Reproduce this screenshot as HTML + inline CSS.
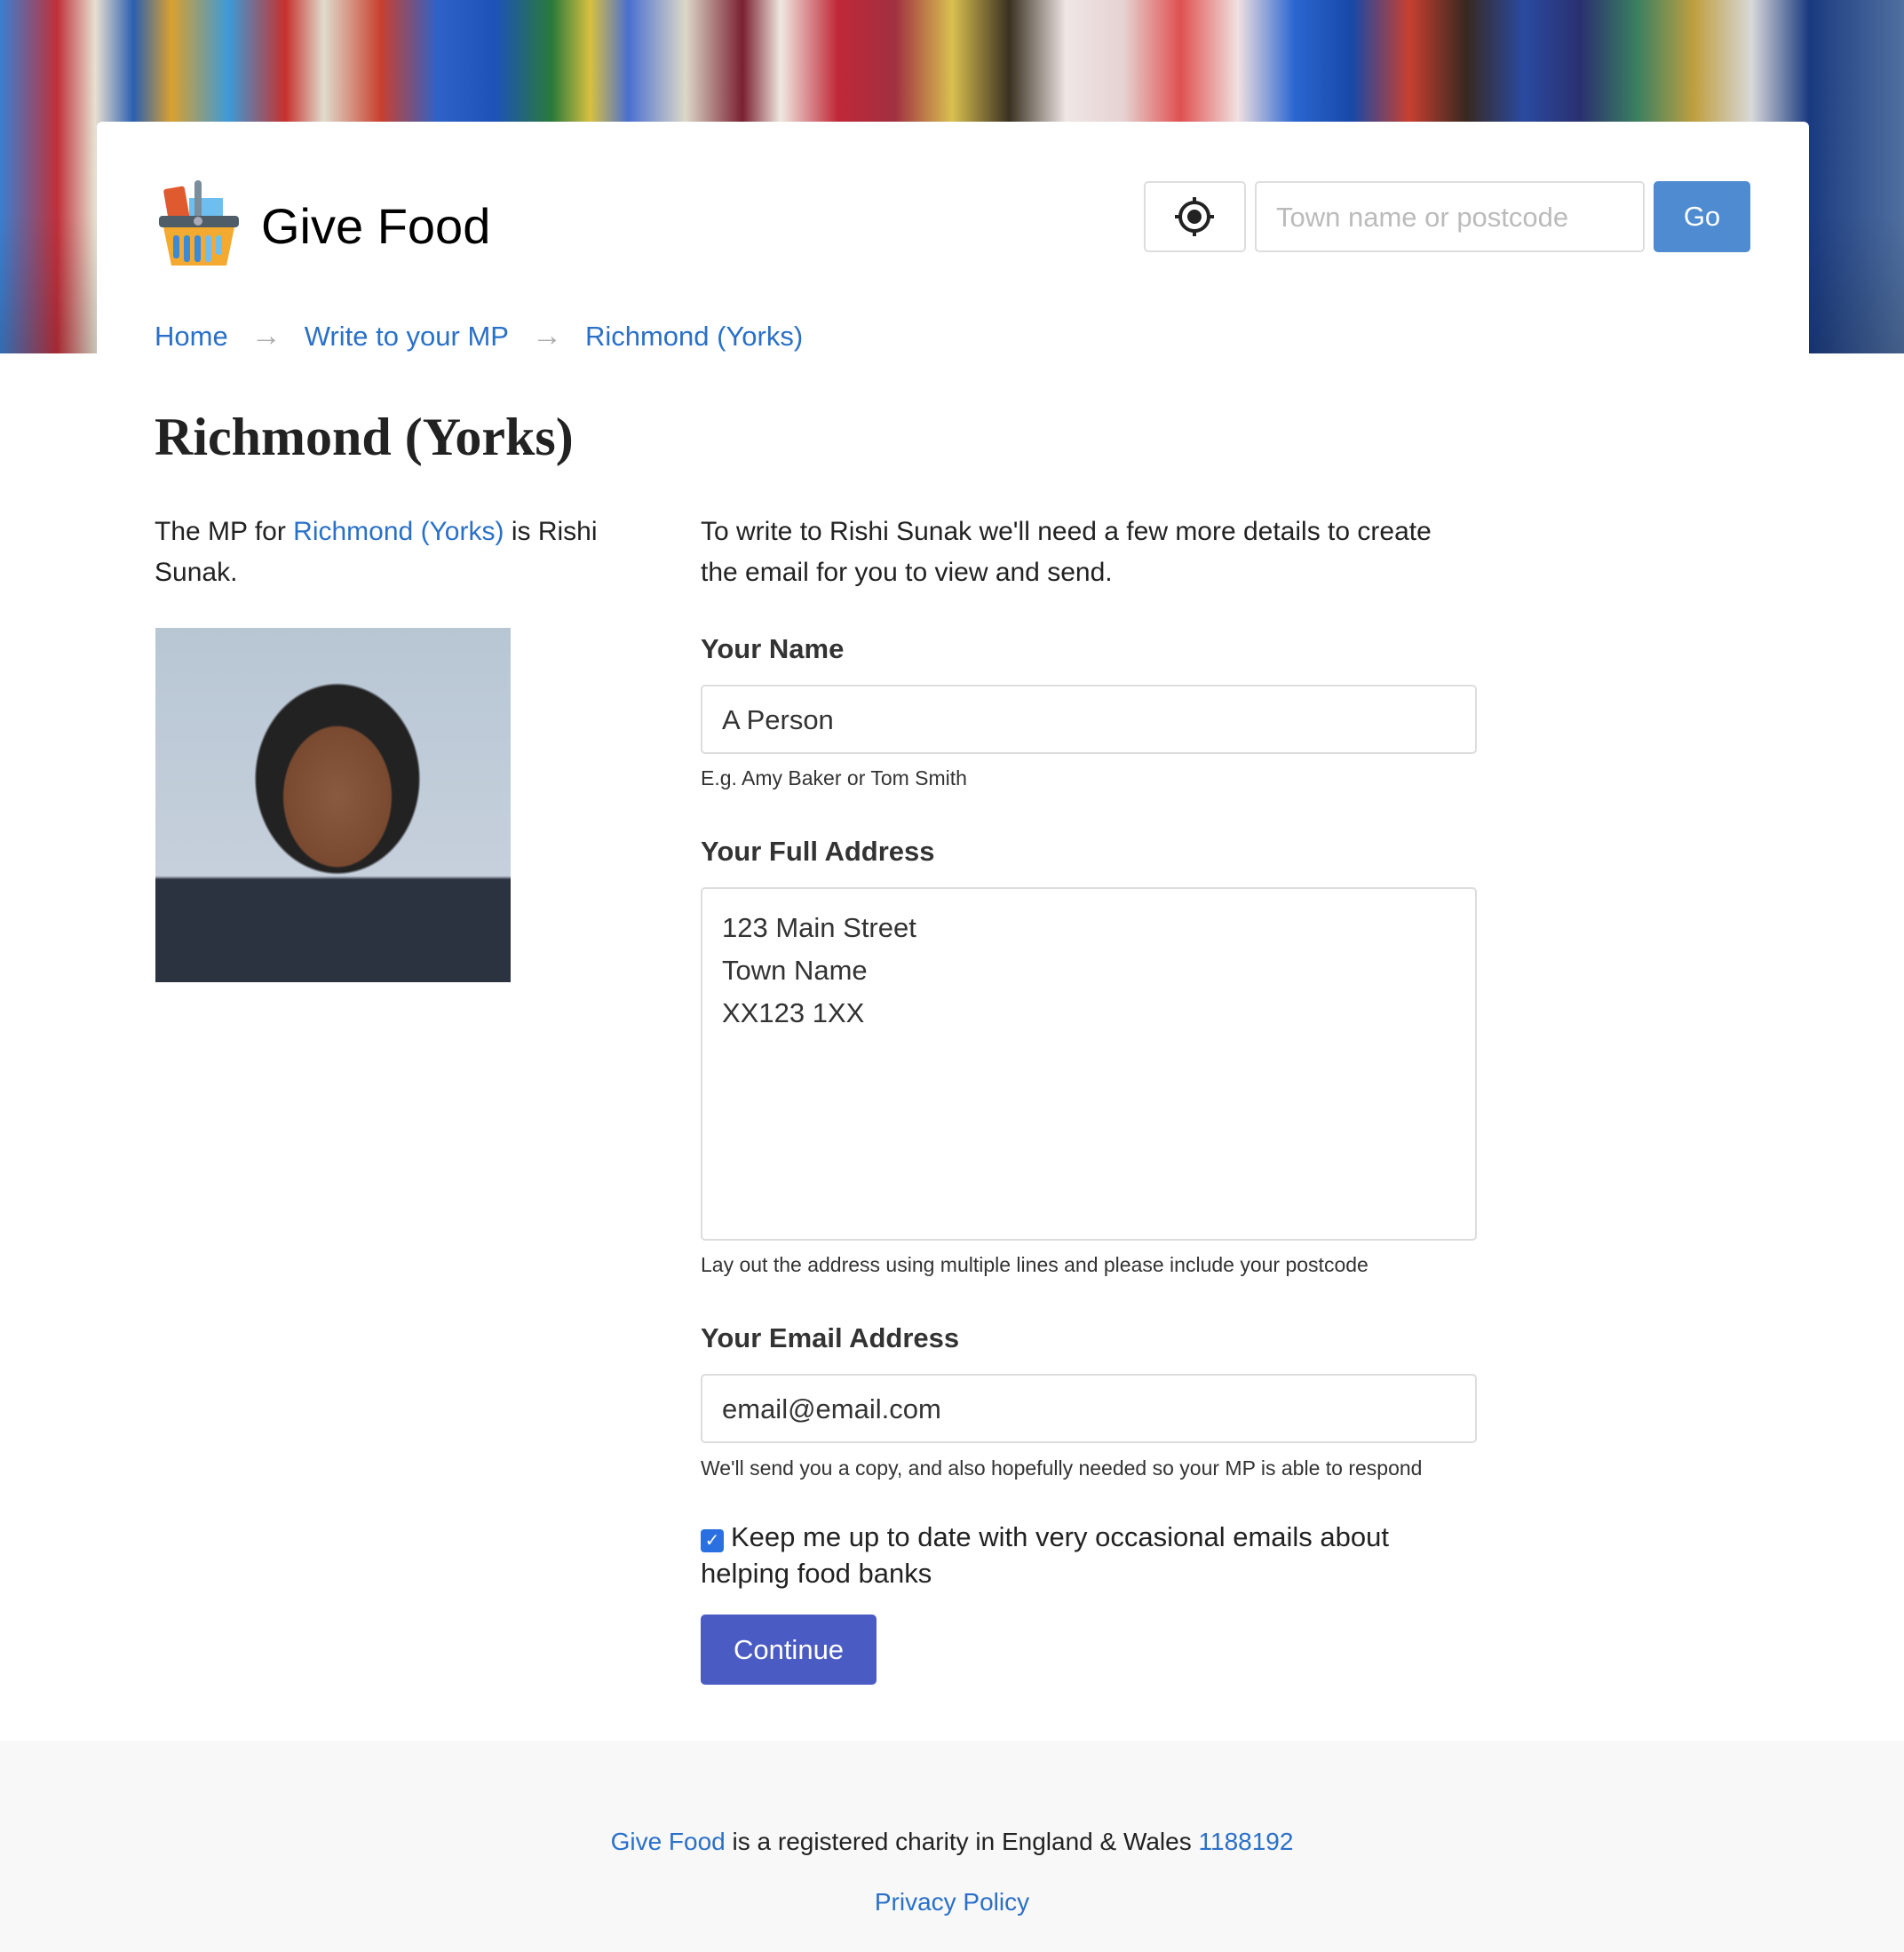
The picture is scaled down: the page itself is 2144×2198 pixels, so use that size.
<!DOCTYPE html>
<html><head><meta charset="utf-8"><style>
*{box-sizing:border-box;margin:0;padding:0}
body{width:2144px;height:2198px;font-family:"Liberation Sans",Arial,sans-serif;color:#222;background:#fff;position:relative;overflow:hidden}
.banner{position:absolute;left:0;top:0;width:2144px;height:398px;
background:
linear-gradient(180deg,rgba(0,0,0,0) 0,rgba(0,0,0,0) 60%,rgba(0,0,0,.15) 100%),
linear-gradient(90deg,#3a7fd0 0,#c0303a 3%,#e8e0d0 5%,#2a5fb0 7%,#d9a030 9%,#3c9ad8 12%,#c8302c 15%,#e0dccd 17%,#c9402e 20%,#2e62c8 23%,#1d52b8 26%,#2a7a3a 29%,#d8c040 31%,#4a6fd0 33%,#dcd8c8 36%,#7a2030 39%,#efe8e0 41%,#c02838 44%,#a03040 47%,#d9c050 50%,#3a3020 53%,#efe6e6 56%,#e6d2d2 59%,#e05050 62%,#f0e0e0 65%,#2a66d0 68%,#1848a8 71%,#c84030 74%,#382820 77%,#2a4aa0 80%,#2a3070 83%,#3a8060 86%,#c0a040 89%,#d8d8d8 92%,#1a3a80 95%,#5070a0 100%);}
.card{position:absolute;left:109px;top:137px;width:1928px;height:400px;background:#fff;border-radius:6px 6px 0 0}
.logo{position:absolute;left:179px;top:203px}
.brand{position:absolute;left:294px;top:222px;font-size:56px;color:#000}
.loc{position:absolute;left:1288px;top:204px;width:115px;height:80px;border:2px solid #ddd;border-radius:5px;background:#fff}
.search{position:absolute;left:1413px;top:204px;width:439px;height:80px;border:2px solid #ddd;border-radius:5px;font-size:31px;color:#bbb;padding:21px 22px}
.go{position:absolute;left:1862px;top:204px;width:109px;height:80px;background:#4f8bd0;border-radius:5px;color:#fff;font-size:31px;text-align:center;line-height:80px}
.crumb{position:absolute;left:174px;top:359px;font-size:31px;color:#2a70c8;white-space:nowrap}
.crumb span{color:#aaa;margin:0 26px;font-size:34px}
a{color:#2a70c8;text-decoration:none}
h1{position:absolute;left:174px;top:458px;font-family:"Liberation Serif",serif;font-size:60px;font-weight:bold;color:#222}
.lt{position:absolute;left:174px;top:576px;width:540px;font-size:30px;line-height:46px}
.photo{position:absolute;left:175px;top:707px;width:400px;height:399px;background:radial-gradient(ellipse 100px 130px at 205px 190px,#8a5a40 0,#7a4a30 60%,transparent 62%),radial-gradient(ellipse 130px 150px at 205px 170px,#222 0,#222 70%,transparent 72%),linear-gradient(180deg,#b8c6d4,#c6d0dc 70%,#2c3340 71%,#2c3340)}
.rt{position:absolute;left:789px;width:880px}
.p{font-size:30px;line-height:46px;width:850px}
.lab{font-size:31px;font-weight:bold;color:#333}
.inp{border:2px solid #ddd;border-radius:5px;height:78px;font-size:31px;padding:20px 22px;color:#333;width:874px}
.help{font-size:23px;color:#333}
.btn{position:absolute;left:789px;top:1818px;width:198px;height:79px;background:#4a5bc4;border-radius:5px;color:#fff;font-size:31px;text-align:center;line-height:79px}
.foot{position:absolute;left:0;top:1960px;width:2144px;height:238px;background:#f8f8f8;text-align:center;font-size:28px;color:#222}
.cb{display:inline-block;width:26px;height:26px;background:#2a70e0;border-radius:4px;vertical-align:0;margin-right:8px;color:#fff;font-size:20px;line-height:26px;text-align:center}
</style></head><body>
<div class="banner"></div>
<div class="card"></div>
<svg class="logo" width="90" height="96" viewBox="0 0 90 96">
<rect x="8" y="8" width="24" height="40" rx="3" fill="#e05a30" transform="rotate(-10 20 28)"/>
<rect x="34" y="20" width="38" height="30" fill="#6cbff0"/>
<rect x="40" y="0" width="8" height="50" rx="4" fill="#7a8d9a"/>
<path d="M4 48 H86 L76 96 H14 Z" fill="#f4aa30"/>
<rect x="0" y="40" width="90" height="13" rx="4" fill="#4f5d68"/>
<circle cx="44" cy="46" r="5" fill="#aab"/>
<rect x="16" y="62" width="7" height="26" rx="3" fill="#3a8ad8"/>
<rect x="28" y="62" width="7" height="30" rx="3" fill="#3a8ad8"/>
<rect x="40" y="62" width="7" height="30" rx="3" fill="#3a8ad8"/>
<rect x="52" y="62" width="7" height="30" rx="3" fill="#6cbff0"/>
<rect x="64" y="62" width="7" height="22" rx="3" fill="#6cbff0"/>
</svg>
<div class="brand">Give Food</div>
<div class="loc"><svg width="111" height="76" viewBox="0 0 111 76"><circle cx="55" cy="38" r="16" fill="none" stroke="#222" stroke-width="4"/><circle cx="55" cy="38" r="8" fill="#222"/><path d="M55 16v8M55 52v8M33 38h8M69 38h8" stroke="#222" stroke-width="4"/></svg></div>
<div class="search">Town name or postcode</div>
<div class="go">Go</div>
<div class="crumb"><a>Home</a><span>→</span><a>Write to your MP</a><span>→</span><a>Richmond (Yorks)</a></div>
<h1>Richmond (Yorks)</h1>
<div class="lt">The MP for <a>Richmond (Yorks)</a> is Rishi Sunak.</div>
<div class="photo"></div>
<div class="rt p" style="top:576px">To write to Rishi Sunak we'll need a few more details to create the email for you to view and send.</div>
<div class="rt lab" style="top:713px">Your Name</div>
<div class="rt inp" style="top:771px">A Person</div>
<div class="rt help" style="top:863px">E.g. Amy Baker or Tom Smith</div>
<div class="rt lab" style="top:941px">Your Full Address</div>
<div class="rt inp" style="top:999px;height:398px;line-height:48px;padding-top:20px">123 Main Street<br>Town Name<br>XX123 1XX</div>
<div class="rt help" style="top:1411px">Lay out the address using multiple lines and please include your postcode</div>
<div class="rt lab" style="top:1489px">Your Email Address</div>
<div class="rt inp" style="top:1547px">email@email.com</div>
<div class="rt help" style="top:1640px">We'll send you a copy, and also hopefully needed so your MP is able to respond</div>
<div class="rt" style="top:1710px;font-size:31px;line-height:41px"><span class="cb">✓</span>Keep me up to date with very occasional emails about helping food banks</div>
<div class="btn">Continue</div>
<div class="foot"><div style="margin-top:98px"><a>Give Food</a> is a registered charity in England &amp; Wales <a>1188192</a></div><div style="margin-top:36px"><a>Privacy Policy</a></div></div>
</body></html>
